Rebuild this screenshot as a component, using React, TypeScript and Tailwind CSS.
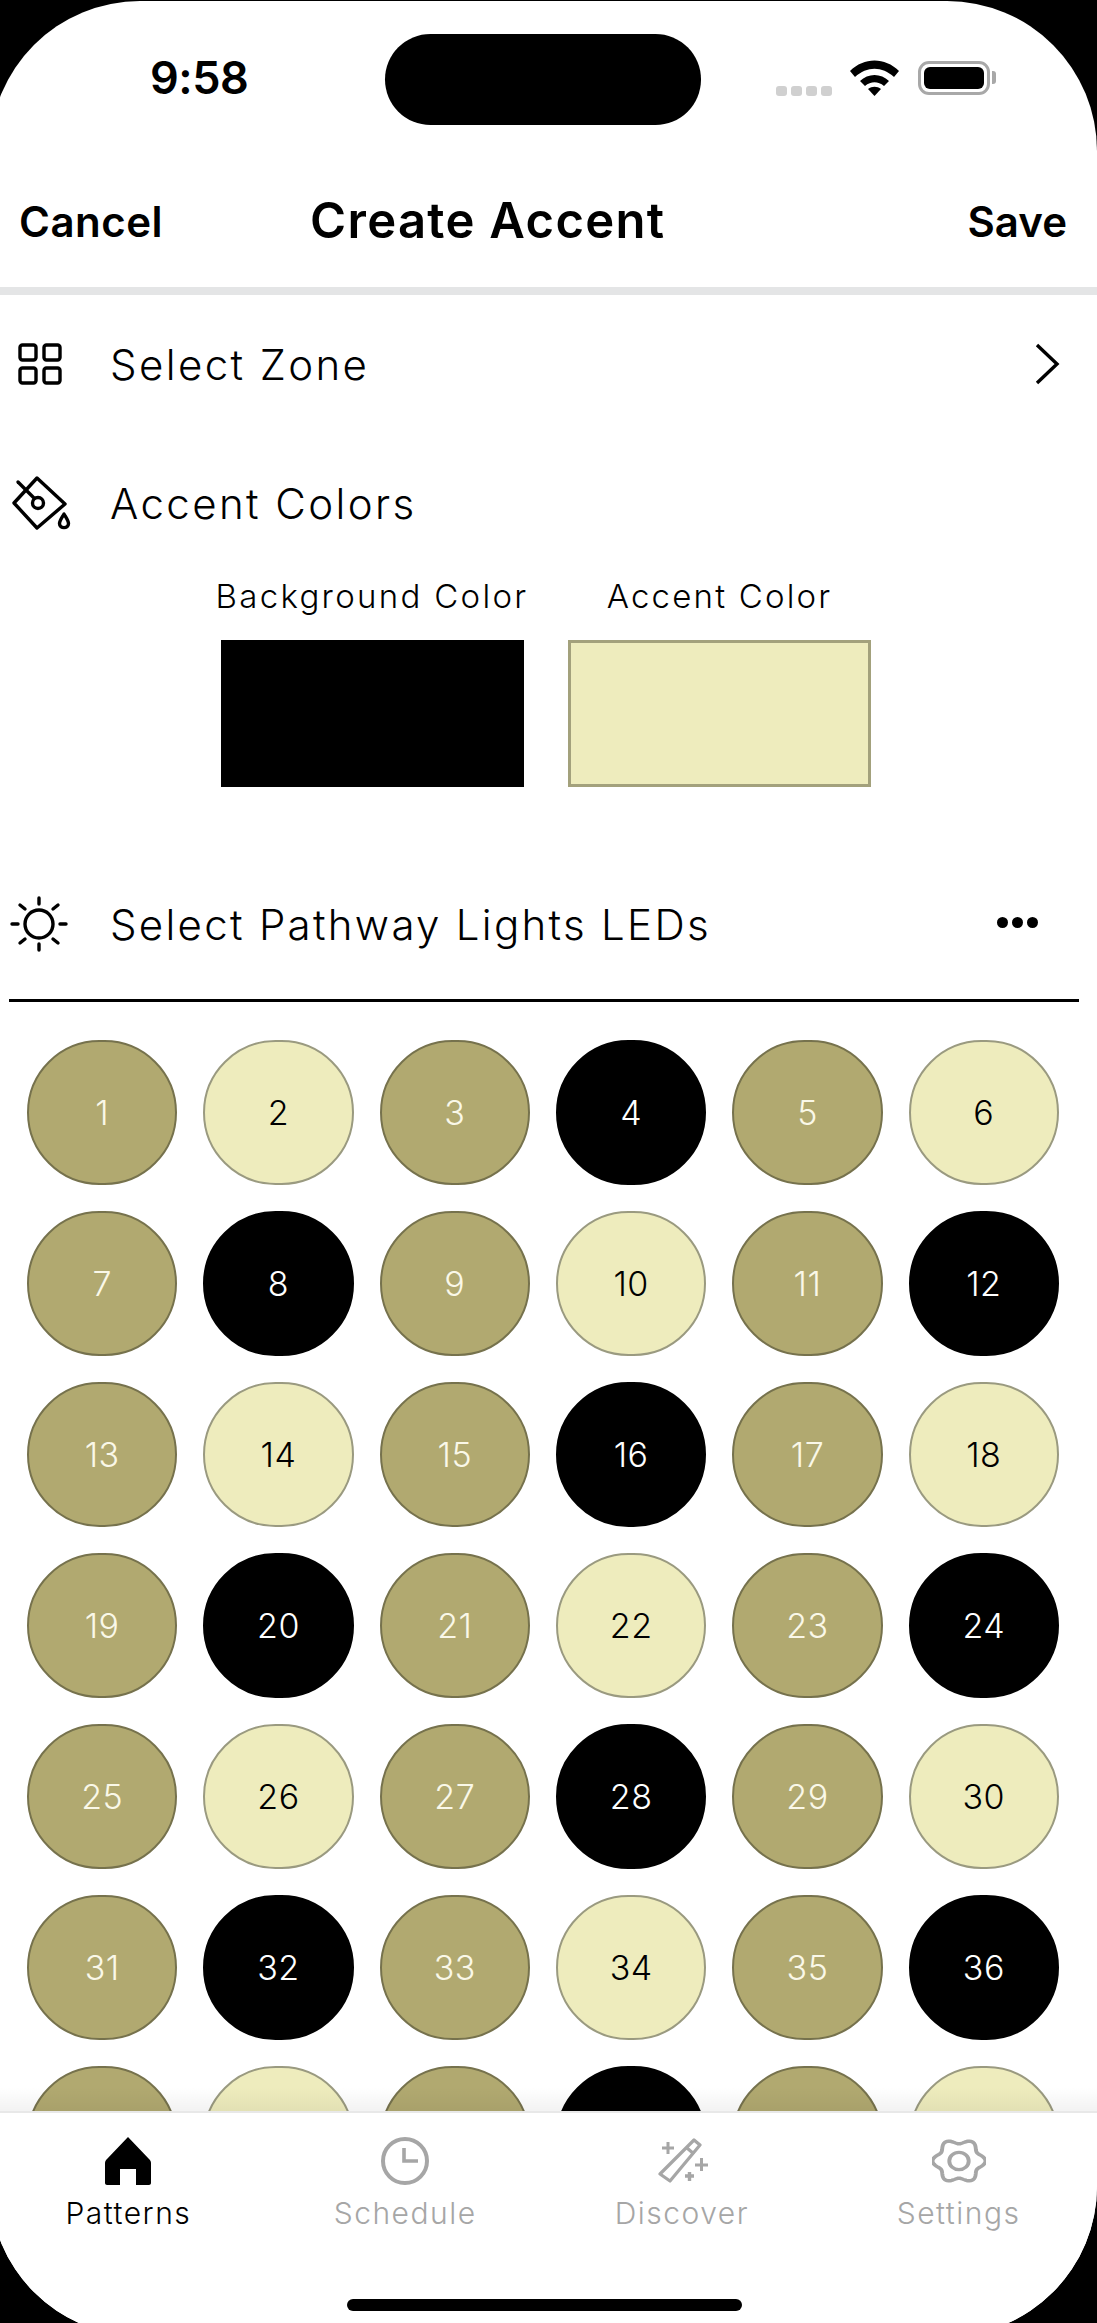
const font = { fontFamily: '"Inter", "Liberation Sans", sans-serif' };

type Led = "olive" | "light" | "black";

const rowA: Led[] = ["olive", "light", "olive", "black", "olive", "light"];
const rowB: Led[] = ["olive", "black", "olive", "light", "olive", "black"];

const leds: Led[] = Array.from({ length: 42 }, (_, i) => {
  const row = Math.floor(i / 6);
  return (row % 2 === 0 ? rowA : rowB)[i % 6];
});

const ledClass: Record<Led, string> = {
  olive: "bg-[#b1a970] border-[#76724d] text-[#faf8e8]",
  light: "bg-[#eeecbd] border-[#9a9a80] text-black",
  black: "bg-black border-black text-white",
};

// six lobed outline for the settings tab
const gearPath = (() => {
  const pts: string[] = [];
  for (let i = 0; i < 120; i++) {
    const a = (i / 120) * Math.PI * 2;
    const r = 20.5 - 2.6 * Math.cos(6 * a);
    pts.push(`${(25 + r * Math.sin(a) * 1.06).toFixed(2)} ${(25 - r * Math.cos(a)).toFixed(2)}`);
  }
  return `M${pts.join("L")}Z`;
})();

function GridIcon() {
  return (
    <svg width="44" height="42" viewBox="0 0 44 42" fill="none" stroke="black" strokeWidth="3.4">
      <rect x="2" y="2" width="16" height="15" rx="2.5" />
      <rect x="26" y="2" width="16" height="15" rx="2.5" />
      <rect x="2" y="25" width="16" height="15" rx="2.5" />
      <rect x="26" y="25" width="16" height="15" rx="2.5" />
    </svg>
  );
}

function BucketIcon() {
  return (
    <svg width="60" height="54" viewBox="0 0 60 54" fill="none" stroke="black" strokeWidth="3.4" strokeLinejoin="round" strokeLinecap="round">
      <path d="M25 2 L53 28 L25 52 L2 27 Z" />
      <path d="M6 6 L22 22" />
      <circle cx="26" cy="27" r="5.5" />
      <path d="M52 38 C49 43 47.500 45 47.500 47.500 C47.500 53 56.500 53 56.500 47.500 C56.500 45 55 43 52 38 Z" />
    </svg>
  );
}

function SunIcon() {
  return (
    <svg width="58" height="56" viewBox="0 0 58 56" fill="none" stroke="black" strokeWidth="3.4" strokeLinecap="round">
      <circle cx="29" cy="28" r="14" />
      <path d="M29 2v6M29 48v6M2 28h6M50 28h6M10 9l5 4M48 9l-5 4M10 47l5-4M48 47l-5-4" />
    </svg>
  );
}

function Wifi() {
  return (
    <svg width="49" height="36" viewBox="0 0 49 36">
      <path d="M0 11 C14 -3 35 -3 49 11 L44 17 C32 6 17 6 5 17 Z" fill="black" />
      <path d="M10 21 C18 13 31 13 39 21 L34 26 C28 21 21 21 15 26 Z" fill="black" />
      <path d="M18 29 C22 26 27 26 31 29 L24.5 36 Z" fill="black" />
    </svg>
  );
}

function StatusBar() {
  return (
    <div className="h-[148px] flex items-start pl-[160px] relative">
      <div className="w-[236px] pt-[50px] text-[45px] leading-[54px] font-semibold tracking-[-0.5px] text-black">9:58</div>
      <div className="mt-[33px] -ml-[1px] w-[316px] h-[91px] rounded-[46px] bg-black" />
      <div className="ml-[75px] pt-[59px] flex items-start">
        <div className="mt-[26px] flex gap-[4px]">
          {[0, 1, 2, 3].map((i) => (
            <div key={i} className="w-[11px] h-[10px] rounded-[3px] bg-[#d0d0d0]" />
          ))}
        </div>
        <div className="ml-[18px]">
          <Wifi />
        </div>
        <div className="ml-[19px] mt-[1px] w-[72px] h-[34px] rounded-[11px] border-[3px] border-[#a8a8a8] p-[3px]">
          <div className="w-full h-full rounded-[6px] bg-black" />
        </div>
        <div className="ml-[2px] mt-[11px] w-[4px] h-[13px] rounded-r-[3px] bg-[#a8a8a8]" />
      </div>
    </div>
  );
}

function NavIcon({ name }: { name: string }) {
  if (name === "Patterns") {
    return (
      <svg width="46" height="48" viewBox="0 0 46 48">
        <path
          d="M23 0 L44 22 C45 23 46 24 46 26 V46 C46 47 45 48 44 48 H31 V32 H15 V48 H2 C1 48 0 47 0 46 V26 C0 24 1 23 2 22 Z"
          fill="black"
        />
      </svg>
    );
  }
  if (name === "Schedule") {
    return (
      <svg width="50" height="48" viewBox="0 0 50 48" fill="none" stroke="#a6a6a6" strokeWidth="4">
        <circle cx="25" cy="24" r="22" />
        <path d="M24 11 V24 H38" strokeWidth="3.6" />
      </svg>
    );
  }
  if (name === "Discover") {
    return (
      <svg className="ml-[5px]" width="52" height="48" viewBox="0 0 52 48" fill="none" stroke="#a6a6a6" strokeWidth="3.2" strokeLinejoin="round">
        <path d="M36 3 L42 8 L12 44 L2 37 Z" />
        <path d="M29 11 L36 17" />
        <path d="M4 11 H16 M10 5 V17 M37 28 H50 M43.5 21 V34" strokeWidth="3" />
        <path d="M27 39 H36 M31.5 35 V44" strokeWidth="3.4" />
      </svg>
    );
  }
  return (
    <svg width="54" height="48" viewBox="0 0 50 50" preserveAspectRatio="none" fill="none" stroke="#a6a6a6" strokeWidth="3.6" strokeLinejoin="round">
      <path d={gearPath} />
      <circle cx="25" cy="25" r="9" />
    </svg>
  );
}

function TabBar() {
  const tabs = ["Patterns", "Schedule", "Discover", "Settings"];
  return (
    <div className="relative bg-white border-t-2 border-[#e8e8e8] h-[225px]">
      <div className="absolute left-0 right-0 -top-[26px] h-[24px] bg-gradient-to-b from-transparent to-black/5" />
      <div className="grid grid-cols-4 pt-[23px]">
        {tabs.map((t, i) => (
          <div key={t} className="flex flex-col items-center">
            <div className="h-[50px] flex items-center">
              <NavIcon name={t} />
            </div>
            <div className={`mt-[9px] text-[30px] leading-[36px] font-light tracking-[1.5px] ${i === 0 ? "text-black" : "text-[#a6a6a6]"}`}>
              {t}
            </div>
          </div>
        ))}
      </div>
      <div className="mt-[68px] ml-[357px] w-[395px] h-[12px] rounded-full bg-black" />
    </div>
  );
}

export default function App() {
  return (
    <div className="w-[1097px] h-[2323px] bg-black overflow-hidden pt-px" style={font}>
      <div className="-ml-[10px] w-[1107px] h-[2335px] bg-white rounded-[150px] flex flex-col overflow-hidden">
        <StatusBar />

        <div className="h-[138px] pl-[29px] pr-[30px] flex items-start text-black font-semibold">
          <span className="mt-[48px] text-[42px] leading-[50px] tracking-[0.5px]">Cancel</span>
          <span className="mt-[45px] ml-[147px] text-[49px] leading-[54px] tracking-[1.3px]">Create Accent</span>
          <span className="mt-[48px] ml-auto text-[42px] leading-[50px]">Save</span>
        </div>
        <div className="h-[8px] bg-[#e4e5e6]" />

        <div className="h-[138px] pl-[28px] pr-[36px] flex items-center">
          <div className="w-[94px]">
            <GridIcon />
          </div>
          <span className="-ml-[2px] text-[42px] font-light tracking-[2.4px]">Select Zone</span>
          <svg className="ml-auto" width="28" height="44" viewBox="0 0 28 44" fill="none" stroke="black" strokeWidth="3.4">
            <path d="M4 3 L24 22 L4 41" />
          </svg>
        </div>

        <div className="h-[140px] pl-[22px] flex items-center">
          <div className="w-[100px]">
            <BucketIcon />
          </div>
          <span className="-ml-[2px] text-[42px] font-light tracking-[2.4px]">Accent Colors</span>
        </div>

        <div className="pl-[230px] flex gap-[44px] mt-[3px]">
          <div className="w-[304px] flex flex-col items-center">
            <span className="text-[33px] leading-[40px] font-light tracking-[2.3px] whitespace-nowrap">Background Color</span>
            <div className="mt-[24px] w-[303px] h-[147px] bg-black" />
          </div>
          <div className="w-[303px] flex flex-col items-center">
            <span className="text-[33px] leading-[40px] font-light tracking-[2.2px] whitespace-nowrap">Accent Color</span>
            <div className="mt-[24px] w-[303px] h-[147px] bg-[#eeecbd] border-[3px] border-[#a3a17c]" />
          </div>
        </div>

        <div className="h-[140px] mt-[67px] pl-[20px] flex items-center">
          <div className="w-[102px]">
            <SunIcon />
          </div>
          <span className="-ml-[2px] text-[42px] font-light tracking-[2.3px]">Select Pathway Lights LEDs</span>
          <div className="ml-auto mr-[59px] flex gap-[4px] -mt-[4px]">
            {[0, 1, 2].map((i) => (
              <div key={i} className="w-[11px] h-[11px] rounded-full bg-black" />
            ))}
          </div>
        </div>

        <div className="ml-[19px] w-[1070px] h-[3px] bg-black mt-[5px]" />

        <div className="flex-1 overflow-hidden pt-[38px] pl-[37px] pr-[38px]">
          <div className="grid grid-cols-6 gap-x-[26px] gap-y-[26px]">
            {leds.map((kind, i) => (
              <div
                key={i}
                className={`h-[145px] rounded-full border-2 flex items-center justify-center text-[34px] font-light tracking-[0.5px] ${ledClass[kind]}`}
              >
                {i < 36 ? i + 1 : null}
              </div>
            ))}
          </div>
        </div>

        <TabBar />
      </div>
    </div>
  );
}
